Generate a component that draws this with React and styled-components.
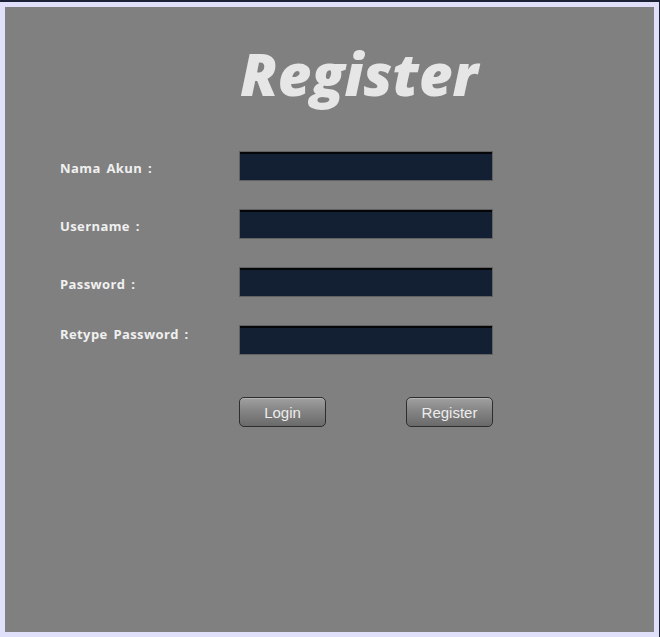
import React from "react";
import styled, { createGlobalStyle } from "styled-components";

const Global = createGlobalStyle`
  html, body { margin: 0; padding: 0; }
  body { width: 660px; height: 637px; overflow: hidden; background: #e0e0fa; }
`;

const Window = styled.div`
  box-sizing: border-box;
  width: 660px;
  height: 637px;
  background: #e0e0fa;
  border-top: 2px solid #1b2236;
  border-right: 1px solid #1b2236;
  padding: 5px 5px 5px 5px;
  display: flex;
`;

const Panel = styled.div`
  flex: 1;
  background: #808080;
  display: flex;
  flex-direction: column;
  padding: 37px 0 0 55px;
`;

const Title = styled.h1`
  margin: 0 0 0 180px;
  font-family: "Open Sans", "DejaVu Sans", sans-serif;
  font-weight: 800;
  font-style: italic;
  font-size: 58px;
  line-height: 60px;
  height: 60px;
  color: #e6e6e6;
`;

const Form = styled.div`
  display: flex;
  flex-direction: column;
  gap: 28px;
  margin-top: 47px;
`;

const Row = styled.div`
  display: flex;
  align-items: ${(p) => (p.$raise ? "flex-start" : "center")};
  height: 30px;
`;

const Label = styled.label`
  width: 179px;
  font-family: "Open Sans", "DejaVu Sans", sans-serif;
  font-weight: 700;
  font-size: 13px;
  letter-spacing: 0.4px;
  word-spacing: 2px;
  color: #f0f0f0;
  padding-top: ${(p) => (p.$raise ? 0 : 3)}px;
`;

const Input = styled.input`
  box-sizing: border-box;
  width: 254px;
  height: 30px;
  margin: 0;
  padding: 0 4px;
  background: #131f33;
  border: 1px solid #626262;
  box-shadow: inset 0 2px 0 #050608;
  color: #ffffff;
  outline: none;
`;

const Buttons = styled.div`
  display: flex;
  justify-content: space-between;
  width: 254px;
  margin: 42px 0 0 179px;
`;

const Button = styled.button`
  box-sizing: border-box;
  width: 87px;
  height: 30px;
  border: 1px solid #2e2e2e;
  border-radius: 5px;
  background: linear-gradient(#a0a0a0 0%, #858585 45%, #6a6a6a 100%);
  box-shadow: inset 0 1px 0 rgba(255,255,255,0.2);
  font-family: "Liberation Sans", Arial, sans-serif;
  font-size: 15px;
  color: #ececec;
  padding: 0;
`;

const fields = [
  { label: "Nama Akun :", type: "text" },
  { label: "Username :", type: "text" },
  { label: "Password :", type: "password" },
  { label: "Retype Password :", type: "password", raise: true },
];

export default function App() {
  return (
    <>
      <Global />
      <Window>
        <Panel>
          <Title>Register</Title>
          <Form>
            {fields.map((f) => (
              <Row key={f.label} $raise={f.raise}>
                <Label $raise={f.raise}>{f.label}</Label>
                <Input type={f.type} />
              </Row>
            ))}
          </Form>
          <Buttons>
            <Button>Login</Button>
            <Button>Register</Button>
          </Buttons>
        </Panel>
      </Window>
    </>
  );
}
